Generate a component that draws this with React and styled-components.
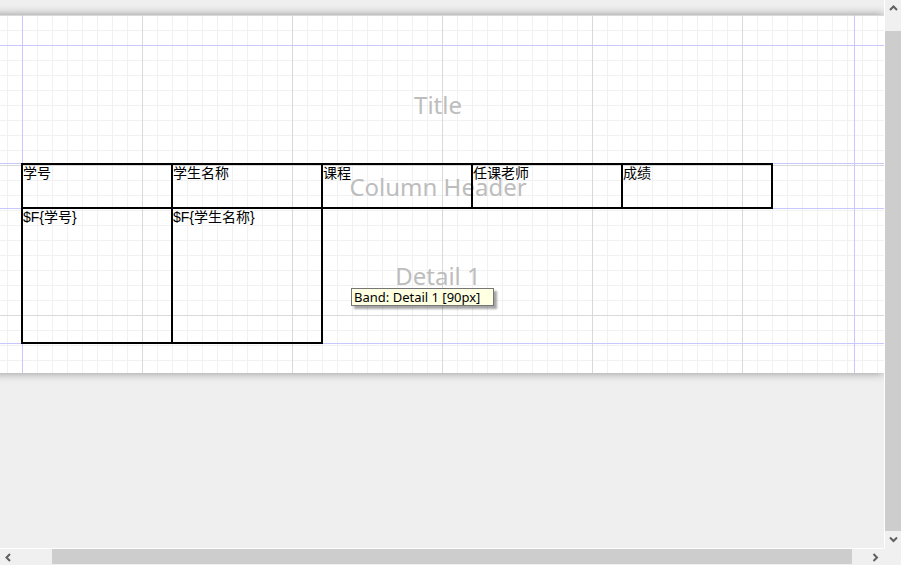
import React from 'react'
import styled, { createGlobalStyle } from 'styled-components'

const colors = {
  chrome: '#f0f0f0',
  desk: '#efefef',
  thumb: '#cdcdcd',
  arrow: '#606060',
  guide: '#c8c8ff',
  minor: '#f1f1f1',
  major: '#d9d9d9',
  label: '#bdbdbd',
}

const Global = createGlobalStyle`
  html, body {
    margin: 0;
    padding: 0;
    overflow: hidden;
    background: ${colors.chrome};
  }
`

const Frame = styled.div`
  display: grid;
  grid-template-columns: 884px 17px;
  grid-template-rows: 548px 17px;
  width: 901px;
  height: 565px;
  background: ${colors.chrome};
`

const Viewport = styled.div`
  position: relative;
  overflow: hidden;
  background: ${colors.desk};
  padding-top: 15px;
  box-sizing: border-box;
`

const Page = styled.div`
  position: relative;
  width: 892px;
  height: 358px;
  margin-left: -8px;
  padding-top: 30px;
  box-sizing: border-box;
  background-color: #fff;
  background-image:
    linear-gradient(to right, ${colors.major} 1px, transparent 1px),
    linear-gradient(to bottom, ${colors.major} 1px, transparent 1px),
    linear-gradient(to right, ${colors.minor} 1px, transparent 1px),
    linear-gradient(to bottom, ${colors.minor} 1px, transparent 1px);
  background-size: 150px 100%, 100% 150px, 15px 100%, 100% 15px;
  box-shadow: 0 0 9px rgba(0, 0, 0, 0.4);

  &::before {
    content: '';
    position: absolute;
    top: 0;
    bottom: 0;
    left: 30px;
    right: 29px;
    border-left: 1px solid ${colors.guide};
    border-right: 1px solid ${colors.guide};
    pointer-events: none;
  }
`

const Band = styled.div`
  display: grid;
  height: ${p => p.$height}px;
  padding: 0 29px 0 29px;
  box-sizing: border-box;
  border-top: 1px solid ${colors.guide};
  border-bottom: ${p => (p.$last ? `1px solid ${colors.guide}` : 'none')};
`

const BandLabel = styled.div`
  grid-area: 1 / 1;
  place-self: center;
  font-family: 'Noto Sans', 'Open Sans', sans-serif;
  font-size: 24px;
  line-height: 30px;
  color: ${colors.label};
  white-space: nowrap;
  margin-top: ${p => p.$shift || 0}px;
`

const CellRow = styled.div`
  grid-area: 1 / 1;
  align-self: start;
  display: flex;
  margin-top: ${p => p.$offset}px;
  position: relative;
`

const Cell = styled.div`
  width: 152px;
  height: ${p => p.$height}px;
  margin-right: -2px;
  border: 2px solid #000;
  box-sizing: border-box;
  font-family: 'Liberation Sans', 'Noto Sans CJK SC', sans-serif;
  font-size: 14px;
  line-height: 16px;
  color: #000;
  white-space: nowrap;
  overflow: hidden;
`

const Tooltip = styled.div`
  position: absolute;
  left: 351px;
  top: 288px;
  width: 143px;
  padding: 0 2px;
  height: 18px;
  box-sizing: border-box;
  border: 1px solid #767676;
  background: #ffffe1;
  font-family: 'Noto Sans', 'Liberation Sans', sans-serif;
  font-size: 13px;
  line-height: 16px;
  color: #000;
  white-space: nowrap;
  box-shadow: 3px 3px 2px rgba(0, 0, 0, 0.35);
`

const VScroll = styled.div`
  display: flex;
  flex-direction: column;
  border-left: 1px solid #fff;
  background: ${colors.chrome};
`

const HScroll = styled.div`
  display: flex;
  border-top: 1px solid #fff;
  background: ${colors.chrome};
`

const ArrowButton = styled.div`
  flex: none;
  width: ${p => (p.$horizontal ? '17px' : '100%')};
  height: ${p => (p.$horizontal ? '100%' : '17px')};
  display: flex;
  align-items: center;
  justify-content: center;
`

const Track = styled.div`
  flex: 1;
  display: flex;
  flex-direction: ${p => (p.$horizontal ? 'row' : 'column')};
  padding: ${p => (p.$horizontal ? '0 15px 1px 35px' : '14px 0 0 0')};
`

const Thumb = styled.div`
  flex: 1;
  background: ${colors.thumb};
`

const Corner = styled.div`
  background: ${colors.chrome};
`

const Chevron = ({ dir }) => {
  const pts = {
    up: '1,5 4.5,1.5 8,5',
    down: '1,1.5 4.5,5 8,1.5',
    left: '5,1 1.5,4.5 5,8',
    right: '1.5,1 5,4.5 1.5,8',
  }[dir]
  const vertical = dir === 'up' || dir === 'down'
  return (
    <svg width={vertical ? 9 : 7} height={vertical ? 7 : 9} viewBox={vertical ? '0 0 9 7' : '0 0 7 9'}>
      <polyline points={pts} fill="none" stroke={colors.arrow} strokeWidth="2" />
    </svg>
  )
}

const headers = ['学号', '学生名称', '课程', '任课老师', '成绩']
const fields = ['$F{学号}', '$F{学生名称}']

export default function App() {
  return (
    <>
      <Global />
      <Frame>
        <Viewport>
          <Page>
            <Band $height={118}>
              <BandLabel $shift={0}>Title</BandLabel>
            </Band>
            <Band $height={45}>
              <BandLabel $shift={1}>Column Header</BandLabel>
              <CellRow $offset={-1}>
                {headers.map(h => (
                  <Cell key={h} $height={46}>{h}</Cell>
                ))}
              </CellRow>
            </Band>
            <Band $height={136} $last>
              <BandLabel $shift={-1}>Detail 1</BandLabel>
              <CellRow $offset={-2}>
                {fields.map(f => (
                  <Cell key={f} $height={137}>{f}</Cell>
                ))}
              </CellRow>
            </Band>
          </Page>
          <Tooltip>Band: Detail 1 [90px]</Tooltip>
        </Viewport>
        <VScroll>
          <ArrowButton><Chevron dir="up" /></ArrowButton>
          <Track>
            <Thumb />
          </Track>
          <ArrowButton><Chevron dir="down" /></ArrowButton>
        </VScroll>
        <HScroll>
          <ArrowButton $horizontal><Chevron dir="left" /></ArrowButton>
          <Track $horizontal>
            <Thumb />
          </Track>
          <ArrowButton $horizontal><Chevron dir="right" /></ArrowButton>
        </HScroll>
        <Corner />
      </Frame>
    </>
  )
}
